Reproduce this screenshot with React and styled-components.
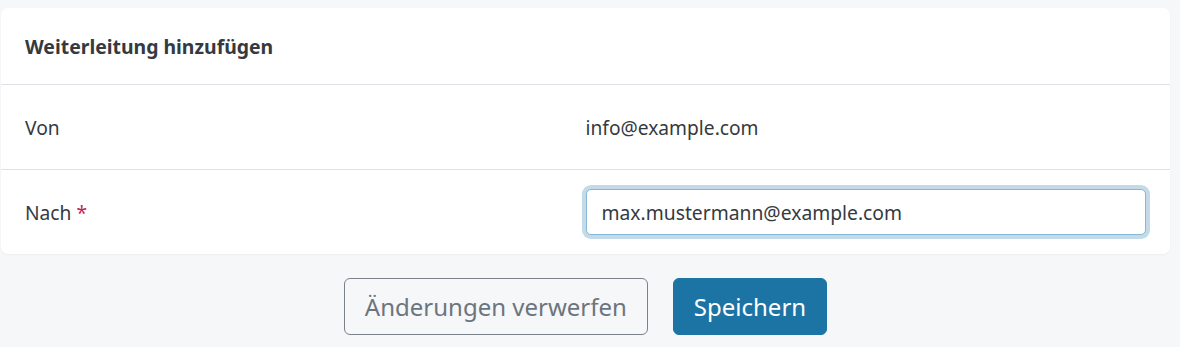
import React from "react";
import styled, { createGlobalStyle } from "styled-components";

const Global = createGlobalStyle`
  html, body { margin: 0; padding: 0; background: #f6f7f9; }
  body { font-family: "Noto Sans", "Open Sans", sans-serif; color: #343a40; }
  * { box-sizing: border-box; }
`;

const Page = styled.div`
  padding: 8px 10px 12px 1px;
  width: 1180px;
`;

const Card = styled.section`
  background: #fff;
  border-radius: 7px;
  box-shadow: 0 1px 2px rgba(0, 0, 0, 0.04);
`;

const Header = styled.h2`
  margin: 0;
  height: 77px;
  display: flex;
  align-items: center;
  padding: 0 24px;
  font-size: 19.4px;
  font-weight: 700;
  color: #343a40;
  border-bottom: 1px solid #dee2e6;
`;

const Row = styled.div`
  display: grid;
  grid-template-columns: 1fr 1fr;
  align-items: center;
  height: ${(p) => p.$h || 85}px;
  border-bottom: ${(p) => (p.$last ? "none" : "1px solid #dee2e6")};
`;

const Label = styled.div`
  padding-left: 24px;
  font-size: 19.2px;
`;

const Value = styled.div`
  padding-right: 24px;
  font-size: 19.2px;
`;

const Required = styled.span`
  color: #c8224f;
  margin-left: 5px;
`;

const Input = styled.input`
  width: 100%;
  height: 46px;
  border: 1px solid #86b7d4;
  border-radius: 5px;
  padding: 0 15px;
  font: inherit;
  font-size: 19.3px;
  color: #343a40;
  caret-color: #212529;
  outline: none;
  box-shadow: 0 0 0 4px #c3dbe8;
  background: #fff;
`;

const Actions = styled.div`
  display: flex;
  justify-content: center;
  gap: 25px;
  margin-top: 24px;
`;

const Button = styled.button`
  height: 57px;
  padding: 0 20px;
  border-radius: 6px;
  font-family: "Noto Sans", "Open Sans", sans-serif;
  font-size: 24px;
  cursor: pointer;
  border: 1px solid ${(p) => (p.$primary ? "#1b74a4" : "#7a8189")};
  background: ${(p) => (p.$primary ? "#1b74a4" : "transparent")};
  color: ${(p) => (p.$primary ? "#ffffff" : "#6c757d")};
`;

export default function App() {
  return (
    <Page>
      <Global />
      <Card>
        <Header>Weiterleitung hinzufügen</Header>
        <Row>
          <Label>Von</Label>
          <Value>info@example.com</Value>
        </Row>
        <Row $last $h={84}>
          <Label>
            Nach<Required>*</Required>
          </Label>
          <Value>
            <Input autoFocus defaultValue="max.mustermann@example.com" />
          </Value>
        </Row>
      </Card>
      <Actions>
        <Button>Änderungen verwerfen</Button>
        <Button $primary>Speichern</Button>
      </Actions>
    </Page>
  );
}
